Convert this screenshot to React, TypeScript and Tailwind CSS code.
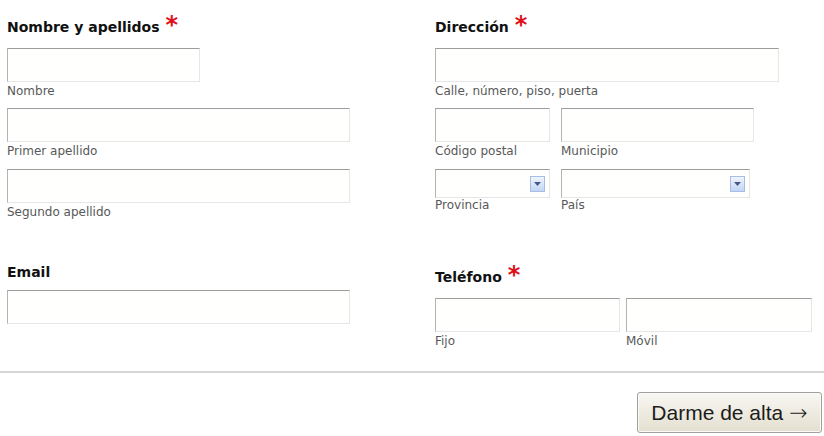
import type { ReactNode } from "react";

const sub = "font-['DejaVu_Sans',sans-serif] text-[12px] leading-[14px] text-[#585858]";
const box =
  "border border-t-[#9c9c9c] border-l-[#b4b4b4] border-r-[#e6e6e6] border-b-[#e6e6e6] bg-[#fffffe]";

function Heading({ text, required }: { text: string; required?: boolean }) {
  return (
    <div className="flex h-[20px] items-start">
      <span className="font-['DejaVu_Sans',sans-serif] text-[14px] font-bold leading-[20px] text-[#111]">{text}</span>
      {required && (
        <span className="-mt-[4px] ml-[6px] font-['DejaVu_Sans',sans-serif] text-[24px] font-bold leading-[24px] text-[#e0101a]">
          *
        </span>
      )}
    </div>
  );
}

function Field({ w, label, h = 34, select }: { w: number; label: string; h?: number; select?: boolean }) {
  return (
    <div className="flex flex-col" style={{ width: w }}>
      <div className={`${box} flex items-center justify-end pr-[4px]`} style={{ height: h }}>
        {select && (
          <div className="flex h-[16px] w-[15px] items-center justify-center border border-[#a6bde6] bg-gradient-to-b from-[#f0f5fd] to-[#c2d4f3]">
            <svg width="7" height="4" viewBox="0 0 7 4">
              <path d="M0 0h7L3.5 4z" fill="#42598a" />
            </svg>
          </div>
        )}
      </div>
      <div className={`${sub} ${select ? "mt-0" : "mt-[2px]"}`}>{label}</div>
    </div>
  );
}

function Row({ children, className = "" }: { children: ReactNode; className?: string }) {
  return <div className={`flex ${className}`}>{children}</div>;
}

export default function App() {
  return (
    <div className="h-[436px] w-[824px] overflow-hidden bg-white">
      <div className="flex pl-[7px]">
        {/* left column */}
        <div className="flex w-[428px] flex-col pt-[17px]">
          <Heading text="Nombre y apellidos" required />
          <div className="mt-[11px]">
            <Field w={193} label="Nombre" />
          </div>
          <div className="mt-[10px]">
            <Field w={343} label="Primer apellido" />
          </div>
          <div className="mt-[11px]">
            <Field w={343} label="Segundo apellido" />
          </div>
          <div className="mt-[43px]">
            <Heading text="Email" />
          </div>
          <div className="mt-[8px]">
            <div className={box} style={{ width: 343, height: 34 }} />
          </div>
        </div>

        {/* right column */}
        <div className="flex flex-1 flex-col pt-[17px]">
          <Heading text="Dirección" required />
          <div className="mt-[11px]">
            <Field w={344} label="Calle, número, piso, puerta" />
          </div>
          <Row className="mt-[10px] gap-[11px]">
            <Field w={115} label="Código postal" />
            <Field w={193} label="Municipio" />
          </Row>
          <Row className="mt-[11px] gap-[11px]">
            <Field w={115} label="Provincia" h={29} select />
            <Field w={189} label="País" h={29} select />
          </Row>
          <div className="mt-[55px]">
            <Heading text="Teléfono" required />
          </div>
          <Row className="mt-[11px] gap-[6px]">
            <Field w={185} label="Fijo" />
            <Field w={186} label="Móvil" />
          </Row>
        </div>
      </div>

      <div className="mt-[23px] h-[2px] w-full bg-[#d6d6d6]" />

      <div className="flex justify-end pr-[2px] pt-[19px]">
        <button className="flex h-[41px] w-[185px] items-center justify-center gap-[6px] rounded-[3px] border border-[#a0a0a0] bg-gradient-to-b from-[#f8f7f2] to-[#e4dfd0] font-['Liberation_Sans',sans-serif] text-[21px] text-[#1c1c1c] shadow-[inset_0_0_0_1px_#fbfaf5]">
          <span>Darme de alta</span>
          <span className="font-['DejaVu_Sans',sans-serif] text-[22px] font-light">→</span>
        </button>
      </div>
    </div>
  );
}
